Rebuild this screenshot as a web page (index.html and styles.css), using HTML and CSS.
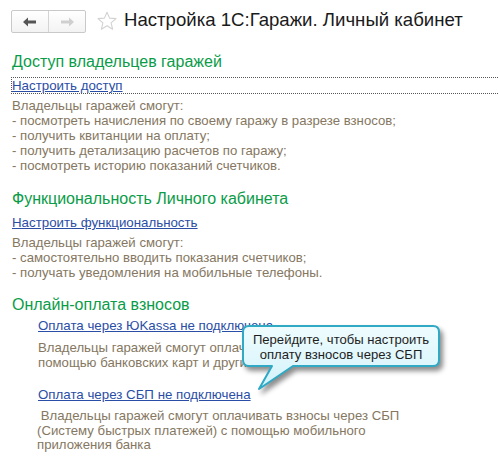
FILE: index.html
```html
<!DOCTYPE html>
<html lang="ru">
<head>
<meta charset="utf-8">
<title>Настройка 1С:Гаражи. Личный кабинет</title>
<link rel="stylesheet" href="styles.css">
</head>
<body>
<div class="page">
  <header class="topbar">
    <div class="navgroup">
      <span class="navbtn">
        <svg width="14" height="10" viewBox="0 0 14 10"><path d="M0 5 L5 0.5 V3.5 H13 V6.5 H5 V9.5 Z" fill="#555"/></svg>
      </span>
      <span class="navbtn">
        <svg width="14" height="10" viewBox="0 0 14 10"><path d="M14 5 L9 0.5 V3.5 H1 V6.5 H9 V9.5 Z" fill="#cfcfcf"/></svg>
      </span>
    </div>
    <svg class="star" width="20" height="20" viewBox="0 0 20 20"><path d="M10 1.2 L12.6 7.1 L19 7.6 L14.1 11.8 L15.6 18.2 L10 14.8 L4.4 18.2 L5.9 11.8 L1 7.6 L7.4 7.1 Z" fill="none" stroke="#d2d2d2" stroke-width="1.1" stroke-linejoin="round"/></svg>
    <h1 class="title">Настройка 1С:Гаражи. Личный кабинет</h1>
  </header>

  <section class="group g1">
    <h2 class="ghead">Доступ владельцев гаражей</h2>
    <a class="link focused" href="#">Настроить доступ</a>
    <p class="note">Владельцы гаражей смогут:<br>- посмотреть начисления по своему гаражу в разрезе взносов;<br>- получить квитанции на оплату;<br>- получить детализацию расчетов по гаражу;<br>- посмотреть историю показаний счетчиков.</p>
  </section>

  <section class="group g2">
    <h2 class="ghead">Функциональность Личного кабинета</h2>
    <a class="link" href="#">Настроить функциональность</a>
    <p class="note">Владельцы гаражей смогут:<br>- самостоятельно вводить показания счетчиков;<br>- получать уведомления на мобильные телефоны.</p>
  </section>

  <section class="group g3">
    <h2 class="ghead">Онлайн-оплата взносов</h2>
    <div class="sub">
      <a class="link l3" href="#">Оплата через ЮKassa не подключена</a>
      <p class="note n3">Владельцы гаражей смогут оплачивать взносы с<br>помощью банковских карт и других способов</p>
      <a class="link l4" href="#">Оплата через СБП не подключена</a>
      <p class="note n4">&nbsp;Владельцы гаражей смогут оплачивать взносы через СБП<br>(Систему быстрых платежей) с помощью мобильного<br>приложения банка</p>
    </div>
  </section>

  <div class="callout">
    <svg class="callout-shape" width="210" height="72" viewBox="0 0 210 72">
      <defs>
        <linearGradient id="cg" x1="0" y1="0" x2="0" y2="1">
          <stop offset="0" stop-color="#effcfe"/>
          <stop offset="1" stop-color="#d2f3fa"/>
        </linearGradient>
      </defs>
      <path d="M9 3 H193 Q199 3 199 9 V37 Q199 43 193 43 H53 L19 66 L32 43 H9 Q3 43 3 37 V9 Q3 3 9 3 Z" fill="url(#cg)" stroke="#2fa9c4" stroke-width="2" stroke-linejoin="round"/>
    </svg>
    <div class="callout-text">Перейдите, чтобы настроить<br>оплату взносов через СБП</div>
  </div>
</div>
</body>
</html>
```
FILE: styles.css
```css
html, body {
  margin: 0;
  padding: 0;
  background: #ffffff;
}

.page {
  position: relative;
  width: 498px;
  height: 469px;
  overflow: hidden;
  font-family: "Liberation Sans", Arial, sans-serif;
}

.topbar {
  display: flex;
  align-items: center;
  height: 23px;
  padding: 10px 0 0 11px;
}

.navgroup {
  display: flex;
  height: 21px;
  border: 1px solid #c9c9c9;
  border-radius: 2px;
  background: linear-gradient(#ffffff, #f3f3f3);
}

.navbtn {
  display: flex;
  align-items: center;
  justify-content: center;
  width: 36px;
  height: 21px;
}

.navbtn + .navbtn {
  border-left: 1px solid #d4d4d4;
}

.star {
  margin-left: 11px;
  margin-top: -2px;
}

.title {
  margin: -3px 0 0 7px;
  font-size: 18.6px;
  font-weight: normal;
  line-height: 22px;
  color: #1a1a1a;
  white-space: nowrap;
}

.group {
  padding-left: 12px;
}

.g1 { margin-top: 19px; }
.g2 { margin-top: 16px; }
.g3 { margin-top: 15px; }

.ghead {
  margin: 0;
  font-size: 16px;
  font-weight: normal;
  line-height: 20px;
  color: #0a9c48;
  white-space: nowrap;
}

.link {
  display: block;
  margin: 5px 0 0 -1px;
  border: 1px dotted transparent;
  font-size: 13.3px;
  line-height: 15px;
  color: #2a4ea6;
  text-decoration: underline;
  white-space: nowrap;
}

.link.focused {
  border-color: #555555;
  border-right: none;
}

.note {
  margin: 4px 0 0 0;
  font-size: 13.2px;
  line-height: 15px;
  color: #857761;
  white-space: nowrap;
}

.sub {
  padding-left: 26px;
}

.link.l3 { margin-top: 2px; }
.note.n3 { margin-top: 6px; }
.link.l4 { margin-top: 16px; }
.note.n4 { margin-top: 6px; margin-left: -1px; line-height: 14.5px; }

.callout {
  position: absolute;
  left: 240px;
  top: 323px;
  width: 210px;
  height: 72px;
}

.callout-shape {
  position: absolute;
  left: 0;
  top: 0;
  filter: drop-shadow(3px 4px 2.5px rgba(0, 0, 0, 0.45));
}

.callout-text {
  position: absolute;
  left: 3px;
  top: 10px;
  width: 196px;
  text-align: center;
  font-size: 13.1px;
  line-height: 14.5px;
  color: #1e1e1e;
}
```
